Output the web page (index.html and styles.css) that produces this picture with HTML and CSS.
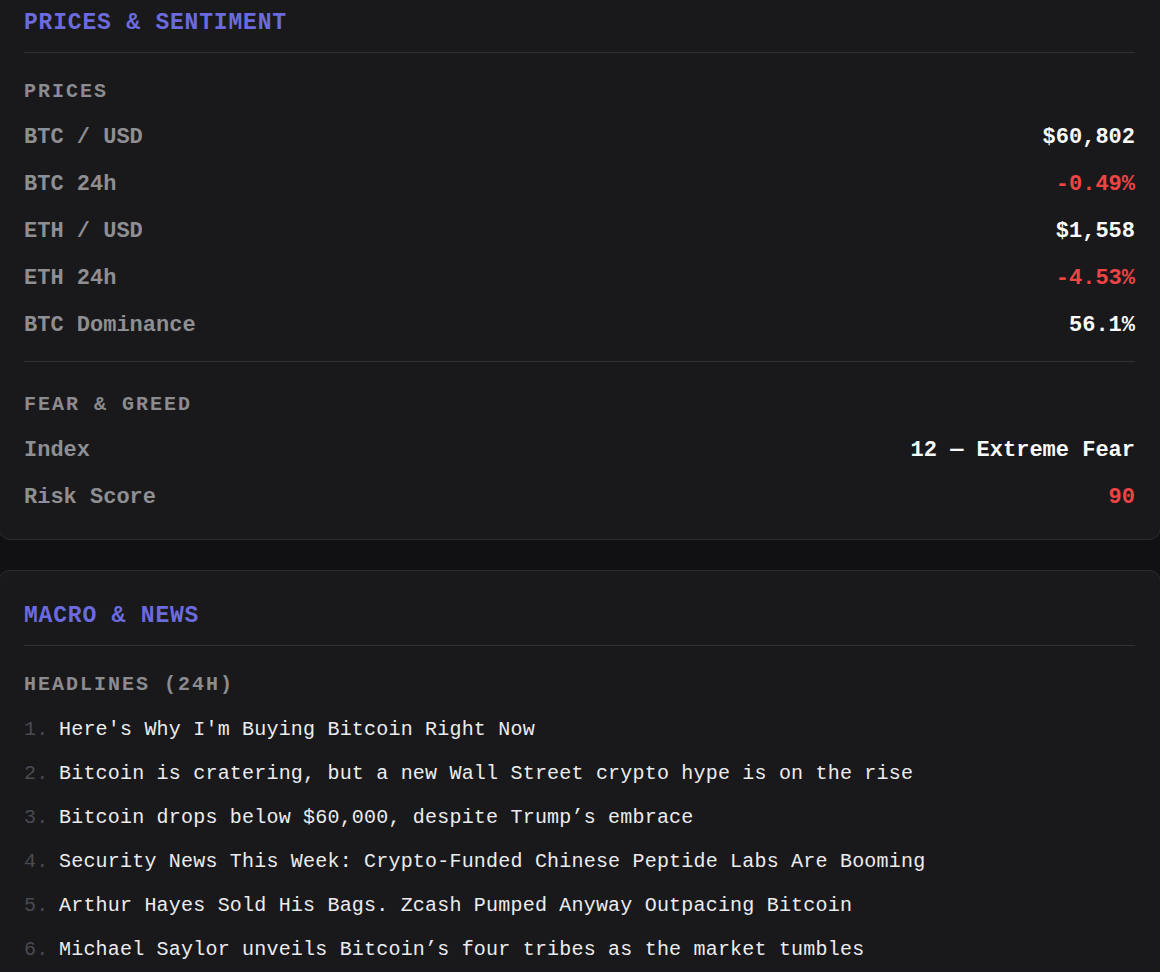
FILE: index.html
```html
<!DOCTYPE html>
<html lang="en">

<head>
    <meta charset="UTF-8">
    <meta name="viewport" content="width=device-width, initial-scale=1.0">
    <title>Market Brief</title>
    <link rel="stylesheet" href="styles.css">
</head>

<body>
    <div class="page">
        <section class="card">
            <h2 class="card-title">PRICES &amp; SENTIMENT</h2>

            <div class="group">
                <h3 class="group-title">PRICES</h3>
                <div class="row"><span class="label">BTC / USD</span><span class="value">$60,802</span></div>
                <div class="row"><span class="label">BTC 24h</span><span class="value down">-0.49%</span></div>
                <div class="row"><span class="label">ETH / USD</span><span class="value">$1,558</span></div>
                <div class="row"><span class="label">ETH 24h</span><span class="value down">-4.53%</span></div>
                <div class="row"><span class="label">BTC Dominance</span><span class="value">56.1%</span></div>
            </div>

            <div class="group">
                <h3 class="group-title">FEAR &amp; GREED</h3>
                <div class="row"><span class="label">Index</span><span class="value">12 — Extreme Fear</span></div>
                <div class="row"><span class="label">Risk Score</span><span class="value down">90</span></div>
            </div>
        </section>

        <section class="card">
            <h2 class="card-title">MACRO &amp; NEWS</h2>

            <div class="group">
                <h3 class="group-title">HEADLINES (24H)</h3>
                <ol class="headlines">
                    <li><span class="num">1.</span>Here's Why I'm Buying Bitcoin Right Now</li>
                    <li><span class="num">2.</span>Bitcoin is cratering, but a new Wall Street crypto hype is on the rise</li>
                    <li><span class="num">3.</span>Bitcoin drops below $60,000, despite Trump’s embrace</li>
                    <li><span class="num">4.</span>Security News This Week: Crypto-Funded Chinese Peptide Labs Are Booming</li>
                    <li><span class="num">5.</span>Arthur Hayes Sold His Bags. Zcash Pumped Anyway Outpacing Bitcoin</li>
                    <li><span class="num">6.</span>Michael Saylor unveils Bitcoin’s four tribes as the market tumbles</li>
                </ol>
            </div>
        </section>
    </div>
</body>

</html>
```

FILE: styles.css
```css
* {
    box-sizing: border-box;
}

html,
body {
    margin: 0;
    background: #111113;
    overflow: hidden;
}

body {
    font-family: "Liberation Mono", "DejaVu Sans Mono", monospace;
    color: #f4f4f5;
}

/* page is shown scrolled a little past the first card's top edge */
.page {
    margin: -23px -1px 0 -2px;
    display: flex;
    flex-direction: column;
    gap: 30px;
}

.card {
    background: #19191b;
    border: 1px solid #2c2c30;
    border-radius: 12px;
    padding: 31px 25px 18px;
}

.card-title {
    margin: 0;
    padding-bottom: 15px;
    border-bottom: 1px solid #313135;
    font-size: 23px;
    line-height: 28px;
    font-weight: bold;
    letter-spacing: 0.8px;
    color: #6b6bdf;
}

.group {
    padding-top: 25px;
}

.group + .group {
    margin-top: 12px;
    padding-top: 29px;
    border-top: 1px solid #313135;
}

.group-title {
    margin: 0 0 8px;
    font-size: 20px;
    line-height: 28px;
    font-weight: bold;
    letter-spacing: 2px;
    color: #8b8b90;
}

.row {
    display: flex;
    justify-content: space-between;
    align-items: center;
    height: 47px;
    font-size: 22px;
    font-weight: bold;
}

.label {
    color: #8e8e93;
}

.value {
    color: #fafafa;
}

.value.down {
    color: #ef4444;
}

.headlines {
    list-style: none;
    margin: 0;
    padding: 0 0 20px;
}

.headlines li {
    display: flex;
    align-items: center;
    height: 44px;
    font-size: 20px;
    letter-spacing: 0.2px;
    color: #ececee;
    white-space: nowrap;
}

.num {
    width: 35px;
    flex-shrink: 0;
    color: #4a4a4f;
}
```
